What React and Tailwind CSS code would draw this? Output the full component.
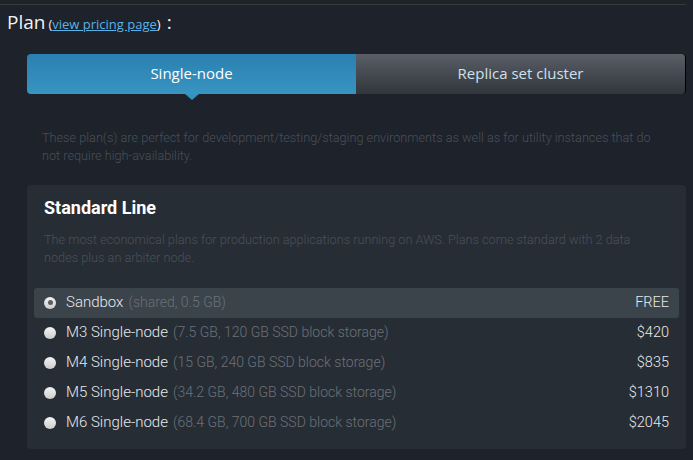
import React from "react";

const plans = [
  { name: "Sandbox", spec: "(shared, 0.5 GB)", price: "FREE", selected: true },
  { name: "M3 Single-node", spec: "(7.5 GB, 120 GB SSD block storage)", price: "$420" },
  { name: "M4 Single-node", spec: "(15 GB, 240 GB SSD block storage)", price: "$835" },
  { name: "M5 Single-node", spec: "(34.2 GB, 480 GB SSD block storage)", price: "$1310" },
  { name: "M6 Single-node", spec: "(68.4 GB, 700 GB SSD block storage)", price: "$2045" },
];

/* radio dot */
const Radio = ({ checked }) => (
  <span className="flex h-[12px] w-[12px] shrink-0 items-center justify-center rounded-full bg-gradient-to-b from-[#f4f4f4] to-[#cdcdcd]">
    {checked && <span className="h-[5px] w-[5px] rounded-full bg-[#5a5f65]" />}
  </span>
);

const PlanRow = ({ name, spec, price, selected }) => (
  <div
    className={`flex h-[30px] items-center pl-[10px] pr-[10px] rounded-[3px] ${selected ? "bg-[#3b434b]" : ""}`}
  >
    <Radio checked={selected} />
    <span className="ml-[10px] text-[15px] font-light text-[#e8eaec]">{name}</span>
    <span className="ml-[5px] text-[14px] font-light text-[#6b7178]">{spec}</span>
    <span className="ml-auto text-[14.5px] font-light text-[#e8eaec]">{price}</span>
  </div>
);

export default function App() {
  return (
    <div className="h-[460px] w-[693px] overflow-hidden bg-[#1d222b] pt-[4px] font-['Roboto',sans-serif]">
      <div className="mr-[7px] h-px bg-[#3a3936]" />

      {/* header */}
      <div className="mt-[3px] flex items-baseline pl-[7px] font-['Open_Sans',sans-serif] text-[#f2f2f2]">
        <span className="text-[19px]">Plan</span>
        <span className="ml-[3px] text-[13px]">
          (<a className="text-[#5ab3e8] underline">view pricing page</a>)
        </span>
        <span className="ml-[6px] text-[19px]">:</span>
      </div>

      {/* tabs */}
      <div className="ml-[27px] mr-[7px] mt-[17px] flex h-[40px] rounded-[4px] font-['Open_Sans',sans-serif] text-[15px]">
        <div className="relative flex w-[329px] items-center justify-center rounded-l-[4px] bg-gradient-to-b from-[#2a80b0] to-[#3894c2] text-white">
          Single-node
          <span className="absolute bottom-[-6px] left-1/2 h-0 w-0 -translate-x-1/2 border-x-[7px] border-t-[6px] border-x-transparent border-t-[#3592c0]" />
        </div>
        <div className="flex flex-1 items-center justify-center rounded-r-[4px] border-r border-black bg-gradient-to-b from-[#5a5f67] to-[#31363d] text-[#cfe0ea]">
          Replica set cluster
        </div>
      </div>

      <p className="ml-[42px] mr-[36px] mt-[35px] text-[12.7px] font-light leading-[18px] text-[#4a5058]">
        These plan(s) are perfect for development/testing/staging environments as well as for utility instances that do
        not require high-availability.
      </p>

      {/* card */}
      <div className="ml-[27px] mr-[7px] mt-[20px] rounded-[4px] bg-[#272d35] pb-[11px] pt-[10px]">
        <h2 className="pl-[17px] text-[18px] font-bold leading-[26px] text-white">Standard Line</h2>
        <p className="mt-[10px] pl-[17px] pr-[24px] text-[12.7px] font-light leading-[18px] text-[#4a5058]">
          The most economical plans for production applications running on AWS. Plans come standard with 2 data
          nodes plus an arbiter node.
        </p>
        <div className="mx-[7px] mt-[21px] flex flex-col">
          {plans.map((p) => (
            <PlanRow key={p.name} {...p} />
          ))}
        </div>
      </div>
    </div>
  );
}
